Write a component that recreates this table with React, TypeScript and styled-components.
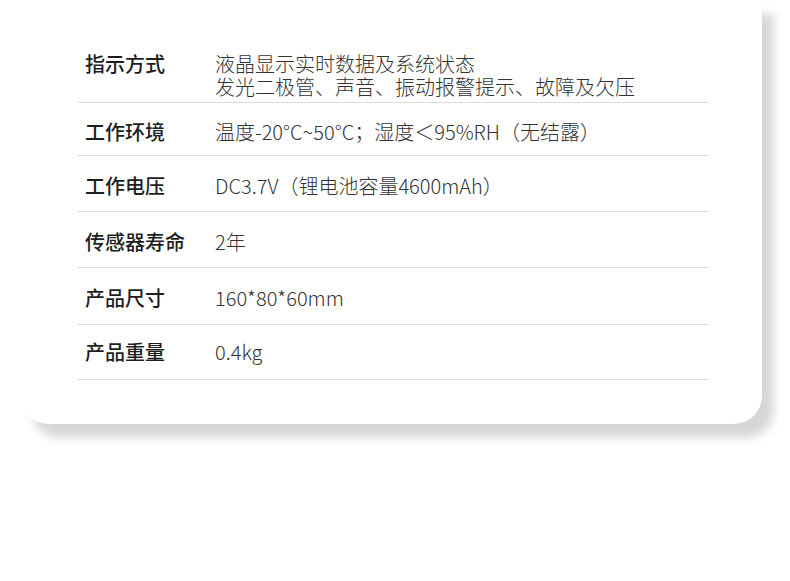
import * as React from "react";
import styled, { createGlobalStyle } from "styled-components";

const GlobalStyle = createGlobalStyle`
  html, body {
    margin: 0;
    padding: 0;
    background: #ffffff;
  }
  body {
    font-family: "Noto Sans CJK SC", "Noto Sans", sans-serif;
    overflow: hidden;
  }
`;

type Spec = {
  label: string;
  value: string[];
  top: number;
  bottom: number;
};

const specs: Spec[] = [
  {
    label: "指示方式",
    value: ["液晶显示实时数据及系统状态", "发光二极管、声音、振动报警提示、故障及欠压"],
    top: 0,
    bottom: 4,
  },
  { label: "工作环境", value: ["温度-20°C~50°C；湿度＜95%RH（无结露）"], top: 17, bottom: 12 },
  { label: "工作电压", value: ["DC3.7V（锂电池容量4600mAh）"], top: 18, bottom: 14 },
  { label: "传感器寿命", value: ["2年"], top: 18, bottom: 14 },
  { label: "产品尺寸", value: ["160*80*60mm"], top: 18, bottom: 15 },
  { label: "产品重量", value: ["0.4kg"], top: 15, bottom: 16 },
];

const Page = styled.div`
  width: 790px;
  height: 581px;
  padding-left: 20px;
  box-sizing: border-box;
`;

const Card = styled.div`
  width: 742px;
  background: #ffffff;
  border-radius: 0 0 28px 28px;
  box-shadow: 12px 14px 10px rgba(0, 0, 0, 0.16);
  padding: 52px 53px 44px 58px;
  box-sizing: border-box;
`;

const Table = styled.div`
  display: flex;
  flex-direction: column;
`;

const Row = styled.div<{ $top: number; $bottom: number }>`
  display: grid;
  grid-template-columns: 137px 1fr;
  align-items: start;
  padding: ${(p) => p.$top}px 0 ${(p) => p.$bottom}px;
  border-bottom: 1px solid #dcdcdc;
`;

const Label = styled.div`
  padding-left: 7px;
  font-size: 20px;
  line-height: 23px;
  font-weight: 500;
  color: #1e1e1e;
`;

const Value = styled.div`
  font-size: 20px;
  line-height: 23px;
  font-weight: 300;
  color: #333333;
  white-space: nowrap;
`;

export default function App() {
  return (
    <Page>
      <GlobalStyle />
      <Card>
        <Table>
          {specs.map((s) => (
            <Row key={s.label} $top={s.top} $bottom={s.bottom}>
              <Label>{s.label}</Label>
              <Value>
                {s.value.map((line) => (
                  <div key={line}>{line}</div>
                ))}
              </Value>
            </Row>
          ))}
        </Table>
      </Card>
    </Page>
  );
}
